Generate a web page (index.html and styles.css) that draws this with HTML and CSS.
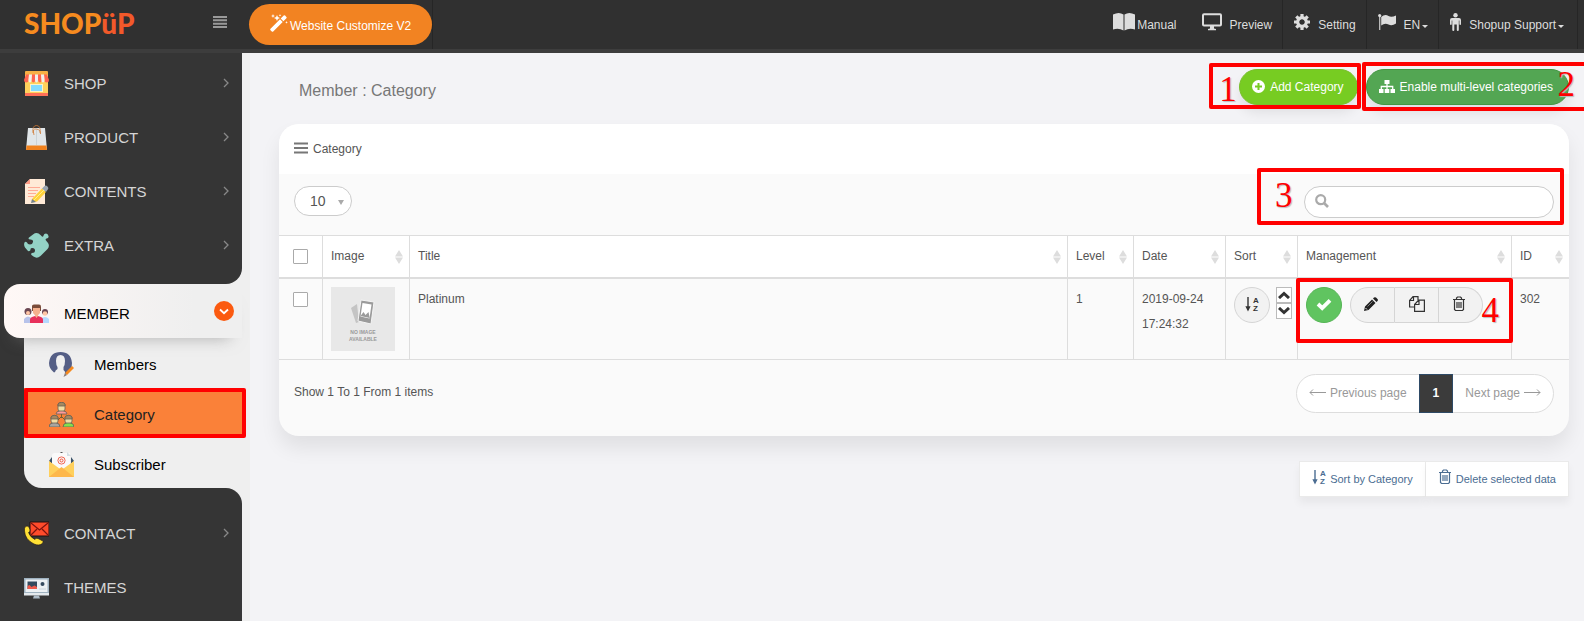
FILE: index.html
```html
<!DOCTYPE html>
<html lang="en">
<head>
<meta charset="utf-8">
<meta name="viewport" content="width=device-width, initial-scale=1">
<title>Member : Category</title>
<link rel="stylesheet" href="styles.css">
</head>
<body>
<svg class="defs" aria-hidden="true">
  <symbol id="i-sort" viewBox="0 0 8 14"><path d="M4 0 8 6.500H0zM4 14 0 7.500h8z" fill="#ddd"/></symbol>
  <symbol id="i-chev" viewBox="0 0 8 10"><path d="M2 1l4 4-4 4" fill="none" stroke="#888" stroke-width="1.300"/></symbol>
  <symbol id="i-trash" viewBox="0 0 14 16"><path d="M1 3.500h12M4.500 3.500V2l1-1h3l1 1v1.500M2.500 3.500V13.500l1 1h7l1-1V3.500M5 6v6M7 6v6M9 6v6" fill="none" stroke="currentColor" stroke-width="1.200"/></symbol>
  <symbol id="i-caret" viewBox="0 0 6 3"><path d="M0 0h6L3 3z" fill="currentColor"/></symbol>
</svg>

<header class="topbar">
  <a class="logo" href="#" aria-label="ShopUp"><span>SHOP</span><span class="logo-red">üP</span></a>
  <button class="menu-toggle" type="button" aria-label="Toggle menu"><svg width="14" height="12"><path d="M0 1h14M0 4.300h14M0 7.700h14M0 11h14" stroke="#999" stroke-width="2"/></svg></button>
  <div class="customize-wrap"><a class="customize" href="#">
    <svg width="18" height="18" viewBox="0 0 18 18" fill="#fff"><path d="M.5 14.800 10 5.300l2.700 2.700-9.500 9.500q-.7.600-1.400 0l-1.300-1.300q-.6-.7 0-1.400zM10.700 4.600l3-3q.7-.6 1.400 0l1.300 1.300q.6.7 0 1.400l-3 3z"/><path d="M3 0l.6 1.400L5 2l-1.400.6L3 4l-.6-1.400L1 2l1.400-.6zM7 1l.9 2.100L10 4l-2.100.9L7 7l-.9-2.100L4 4l2.100-.9zM10 0l.4.9.9.4-.9.4-.4.9-.4-.9-.9-.4.9-.4zM16.500 7l.4 1 1 .4-1 .4-.4 1-.4-1-1-.4 1-.4z"/></svg>
    Website Customize V2</a></div>
  <nav class="top-links">
    <a class="manual" href="#"><svg width="22" height="18" viewBox="0 0 22 18" fill="#ddd"><path d="M0 1.500Q6-1.500 10.500 1.500V17.500Q6 14.800 0 16.500zM11.500 1.500Q16-1.500 22 1.500V16.500Q16 14.800 11.500 17.500z"/></svg>Manual</a>
    <a href="#"><svg width="20" height="18" viewBox="0 0 20 18"><rect x="1" y="1.200" width="18" height="11.300" rx="1" fill="none" stroke="#ddd" stroke-width="2"/><path d="M8 13h4v2.500l2 .5v1.200H6V16l2-.5z" fill="#ddd"/></svg>Preview</a>
    <a href="#"><svg width="16" height="16" viewBox="0 0 16 16"><circle cx="8" cy="8" r="4.200" fill="none" stroke="#ddd" stroke-width="3.400"/><path d="M8 0v3.500M8 12.500V16M0 8h3.500M12.500 8H16M2.300 2.300l2.500 2.500M11.200 11.200l2.500 2.500M13.700 2.300l-2.500 2.500M4.800 11.200l-2.500 2.500" stroke="#ddd" stroke-width="3.200"/><circle cx="8" cy="8" r="2.500" fill="#303030"/></svg>Setting</a>
    <a href="#"><svg width="18" height="16" viewBox="0 0 18 16" fill="#ddd"><circle cx="1.700" cy="1.600" r="1.600"/><path d="M1.200 2h1.100v14H1.200zM3.200 3Q7-.5 10.500 2q3 1.700 7.500-.6v8.200q-4 2.600-7.500 1-3.500-1.800-7.300.8z"/></svg>EN<svg class="caret" width="6" height="3"><use href="#i-caret"/></svg></a>
    <a class="user" href="#"><svg width="11" height="18" viewBox="0 0 11 18" fill="#ddd"><circle cx="5.500" cy="2.200" r="2.200"/><path d="M2 5h7q2 0 2 2v4q0 .9-.8.900T9.400 11V7.500h-.6V17q0 1-1 1t-1-1v-5.500H4.300V17q0 1-1 1t-1-1V7.500h-.6V11q0 .9-.8.900T0 11V7q0-2 2-2z"/></svg>Shopup Support<svg class="caret" width="6" height="3"><use href="#i-caret"/></svg></a>
  </nav>
</header>

<div class="layout">
  <aside class="sidebar">
    <nav class="nav-block nav-upper">
      <a class="nav-item" href="#"><svg class="ico" viewBox="0 0 25 25"><path d="M1 3h23v21q0 1-1 1H2q-1 0-1-1z" fill="#ffd15c"/><path d="M1 1q0-1 1-1h21q1 0 1 1v3H1z" fill="#f7b045"/><path d="M2 3.500h3L4.500 9q0 2.500-2.200 2.500T0 9zM8 3.500h3V9q0 2.500-1.500 2.500T7.500 9zM14 3.500h3l.5 5.500q0 2.500-1.500 2.500T14 9zM20 3.500h3L25 9q0 2.500-2.300 2.500T20.500 9z" fill="#ff6350"/><path d="M5 3.500h3L7.500 9q0 2.500-1.500 2.500T4.500 9zM11 3.500h3V9q0 2.500-1.500 2.500T11 9zM17 3.500h3l.5 5.500q0 2.500-1.500 2.500T17.500 9z" fill="#f2eeee"/><path d="M6 13h13v8H6z" fill="#fff3c4"/><path d="M7 14h11v6H7z" fill="#84dbff"/><path d="M1 22h23v2q0 1-1 1H2q-1 0-1-1z" fill="#ff7058"/></svg><span>SHOP</span><svg class="chev"><use href="#i-chev"/></svg></a>
      <a class="nav-item" href="#"><svg class="ico" viewBox="0 0 25 25"><path d="M4 3h17l2 22H2z" fill="#e1e6e9"/><path d="M2.500 20.500h20L23 25H2z" fill="#f0821e"/><path d="M12.500 4v16" stroke="#ccd3d7"/><path d="M9 8Q8 .5 12.500.5T16 8M10 10Q8 3 12.500 4t4 5" fill="none" stroke="#cf7a35" stroke-width=".8"/></svg><span>PRODUCT</span><svg class="chev"><use href="#i-chev"/></svg></a>
      <a class="nav-item" href="#"><svg class="ico" viewBox="0 0 25 25"><path d="M6 0h15v25H1V5z" fill="#ffead7"/><path d="M6 0v5H1z" fill="#ff9b85"/><path d="M4 8.500h12M4 11.500h10M4 14.500h8M4 17.500h6" stroke="#ff9a85" stroke-width=".8"/><path d="M8 20 18 9.500l4 3.500-9 9.500-5 1z" fill="#ffd13b"/><path d="M10 21 20 11" stroke="#fff08a"/><path d="M18 9.500 20.500 7q1.500-1 3 .5t.5 2.800L22 13z" fill="#9aa5b0"/><path d="M8 20l4 3-5 1z" fill="#758390"/></svg><span>CONTENTS</span><svg class="chev"><use href="#i-chev"/></svg></a>
      <a class="nav-item" href="#"><svg class="ico" viewBox="0 0 25 25"><path d="M5 4.500 9 1.500q4-3 7.500.5l1.500 1.500q1.500.5 1.500-1Q20 .5 22 .5T24.500 3 22.500 5.500q-1.500.5-.5 2l2 2.500q2 3-.5 6l-7 7q-3.500 3-7 .5L7.500 22q-1-1.500.5-2 3 0 3-2.500T8.500 15 6.500 17q-.5 1.500-2.500 1L1 14.500Q-.5 12 .5 9.500 1.500 8 3 9.500q.5 2 3 2T9 9 6.500 6.500 5 4.500z" fill="#94d3c6"/></svg><span>EXTRA</span><svg class="chev"><use href="#i-chev"/></svg></a>
    </nav>
    <div class="nav-open">
      <a class="nav-item nav-current" href="#"><svg class="ico" viewBox="0 0 25 25"><circle cx="4" cy="10.500" r="3.500" fill="#6b4652"/><circle cx="4" cy="12" r="2" fill="#ffc6a5"/><path d="M0 22v-4q4-5 8 0v4z" fill="#b8c3ea"/><circle cx="21" cy="11" r="3" fill="#6b4652"/><circle cx="21" cy="12.500" r="2.300" fill="#ffc6a5"/><path d="M17 22v-4q4-4 8 0v4z" fill="#b5d9ff"/><path d="M8 5q0-1.500 2-1.500h5q2 0 2 2V10H8z" fill="#7b4c3a"/><path d="M9 7h7v5q-3.500 5-7 0zM11 13h3v4h-3z" fill="#f5b08d"/><path d="M6 22v-3.500q0-2 2-2.500l3-1 1.500 2 1.500-2 3 1q2 .5 2 2.500V22z" fill="#e8315b"/></svg><span>MEMBER</span><svg class="open-mark" viewBox="0 0 20 20"><circle cx="10" cy="10" r="10" fill="#fb5a10"/><path d="M6 8.500l4 3.700 4-3.700" fill="none" stroke="#fff" stroke-width="1.800"/></svg></a>
      <div class="submenu">
        <a href="#"><svg class="ico" viewBox="0 0 25 25"><path d="M5 20.500Q0 16.500 0 11 1 0 11.500 0T23 11l-.5 5L16 22l-1-3H8z" fill="#555f86"/><path d="M7 9q0-6 4.500-6T16 9q0 4-1.500 6v3q2 1 1.500 3.500-5 2-10-.8Q6 18 8.500 17v-2Q7 13 7 9z" fill="#f0f0f0"/><path d="M16 21l7-7 2 2-7 7z" fill="#f58a1f"/><path d="M16 21l2 2-3.500 2z" fill="#8a7a74"/></svg>Members</a>
        <a class="active" href="#"><svg class="ico" viewBox="0 0 25 25"><path d="M12.500 11v5M8 19l4.500-4.500L17 19" stroke="#74602f" fill="none"/><g stroke="#675f53" stroke-width=".8"><rect x="9" y=".5" width="7" height="9" rx="2.500" fill="#f2dda4"/><path d="M9 4V2q3.500-3.500 7 0v2z" fill="#a58860"/><path d="M7 12q0-3 4-3h3q4 0 4 3z" fill="#ff9a9a"/><rect x="2" y="13.500" width="7" height="8" rx="2.500" fill="#f2dda4"/><path d="M2 17v-2q3.500-3.500 7 0v2z" fill="#a58860"/><path d="M0 25q0-4 4-4h3q4 0 4 4z" fill="#a8a5a0"/><rect x="16" y="13.500" width="7" height="8" rx="2.500" fill="#f2dda4"/><path d="M16 17v-2q3.500-3.500 7 0v2z" fill="#a58860"/><path d="M14 25q0-4 4-4h3q4 0 4 4z" fill="#83e04f"/></g></svg>Category<i class="mark mark-menu"></i></a>
        <a href="#"><svg class="ico" viewBox="0 0 25 25"><path d="M0 9 3 5v7zM25 9l-3-4v7z" fill="#3b5368"/><path d="M3 4q0-3 3-3h15v15H3z" fill="#fafafa"/><path d="M18 0l4 4h-4z" fill="#d5dfe4"/><path d="M11 0h3l-1 1h-1z" fill="#555"/><circle cx="12.500" cy="8.500" r="3.600" fill="none" stroke="#f0563f" stroke-width=".9"/><circle cx="12.500" cy="8.500" r="1.500" fill="none" stroke="#f0563f"/><path d="M0 9 12.500 18 25 9v16H0z" fill="#ffd05c"/><path d="M0 25 12.500 15 25 25z" fill="#fdb74b"/></svg>Subscriber</a>
      </div>
    </div>
    <nav class="nav-block nav-lower">
      <a class="nav-item" href="#"><svg class="ico" viewBox="0 0 25 25"><path d="M6 1h19v14H6z" fill="#ff4b2b" stroke="#1f1110"/><path d="M7 2l8.500 7L24 2M7 14l6-6M24 14l-6-6" fill="none" stroke="#7b120e" stroke-width="1.200"/><path d="M1 6q2-2 4 0l1 3q0 2-1.500 2.500Q6 16 11 18.500q1-2 3-1l4 2q2 1 .5 2.800-3 3-8.500.7Q1 18.500.5 10 .3 7 1 6z" fill="#ffe135" stroke="#1f1110" stroke-width=".6"/></svg><span>CONTACT</span><svg class="chev"><use href="#i-chev"/></svg></a>
      <a class="nav-item" href="#"><svg class="ico" viewBox="0 0 25 25"><path d="M0 3h25v17H0z" fill="#9fb2c0"/><path d="M1.500 4.500h22V17h-22z" fill="#edf1f4"/><path d="M0 18h25v2.500H0z" fill="#e4e9ed"/><path d="M10 20.500h5l1 3H9z" fill="#aebcc8"/><path d="M3.500 6.500H13V14H3.500z" fill="#344a5e"/><path d="M3.500 14v-3l2-1 2 2 3-1.500L13 12v2z" fill="#ef5b4c"/><circle cx="18.500" cy="9" r="2" fill="#344a5e"/><path d="M15 14h7" stroke="#ccd6dd"/></svg><span>THEMES</span></a>
    </nav>
  </aside>

  <main class="content">
    <div class="page-head">
      <h1>Member : Category</h1>
      <div class="page-actions">
        <div class="marked"><a class="btn btn-add" href="#"><svg width="13" height="13" viewBox="0 0 13 13"><circle cx="6.500" cy="6.500" r="6.500" fill="#fff"/><path d="M6.500 3v7M3 6.500h7" stroke="#7c2" stroke-width="2"/></svg>Add Category</a><i class="mark mark-add"></i><b class="num num-add">1</b></div>
        <div class="marked"><a class="btn btn-multi" href="#"><svg width="16" height="13" viewBox="0 0 16 13" fill="#fff"><path d="M5.500 0h5v4h-5zM0 9h4.500v4H0zM5.700 9h4.600v4H5.700zM11.500 9H16v4h-4.500z"/><path d="M8 4v5M2.300 9V6.500h11.400V9" fill="none" stroke="#fff" stroke-width="1.300"/></svg>Enable multi-level categories</a><i class="mark mark-multi"></i><b class="num num-multi">2</b></div>
      </div>
    </div>

    <section class="panel">
      <h2><svg width="14" height="12"><path d="M0 1.500h14M0 6h14M0 10.500h14" stroke="#777" stroke-width="2"/></svg>Category</h2>
      <div class="toolbar">
        <div class="select"><select aria-label="Items per page"><option>10</option><option>25</option></select><svg width="6" height="5"><path d="M0 0h6L3 5z" fill="#aaa"/></svg></div>
        <div class="marked search"><input type="search" aria-label="Search"><svg width="14" height="14" viewBox="0 0 14 14"><circle cx="5.700" cy="5.700" r="4.500" fill="none" stroke="#aaa" stroke-width="2.200"/><path d="M9 9l4 4" stroke="#aaa" stroke-width="2.600"/></svg><i class="mark mark-search"></i><b class="num num-search">3</b></div>
      </div>
      <table>
        <colgroup><col class="c-check"><col class="c-image"><col><col class="c-level"><col class="c-date"><col class="c-sort"><col class="c-manage"><col class="c-id"></colgroup>
        <thead><tr>
          <th class="check"><input type="checkbox" aria-label="Select all"></th>
          <th><div>Image<svg><use href="#i-sort"/></svg></div></th>
          <th><div>Title<svg><use href="#i-sort"/></svg></div></th>
          <th><div>Level<svg><use href="#i-sort"/></svg></div></th>
          <th><div>Date<svg><use href="#i-sort"/></svg></div></th>
          <th><div>Sort<svg><use href="#i-sort"/></svg></div></th>
          <th><div>Management<svg><use href="#i-sort"/></svg></div></th>
          <th><div>ID<svg><use href="#i-sort"/></svg></div></th>
        </tr></thead>
        <tbody><tr>
          <td class="check"><input type="checkbox" aria-label="Select Platinum"></td>
          <td><svg class="thumb" viewBox="0 0 64 64"><path d="M0 0h64v64H0z" fill="#e8e8e8"/><path d="M20 21l6-4 2 18-3 1z" fill="#c4c4c4"/><path d="M30 13l13 2-3 22-13-3z" fill="#9b9b9b" stroke="#f4f4f4"/><path d="M31.500 16l9 1.500-2 14-9-2z" fill="#fff"/><path d="M29.500 29l3-4 2 3 3-3 1.200 6z" fill="#9b9b9b"/><text x="32" y="47" font-size="5">NO IMAGE</text><text x="32" y="54" font-size="5">AVAILABLE</text></svg></td>
          <td>Platinum</td>
          <td>1</td>
          <td>2019-09-24<br>17:24:32</td>
          <td><div class="sort-cell"><button class="round" type="button" aria-label="Sort"><svg class="alpha" width="14" height="16" viewBox="0 0 14 16"><path d="M3 1v12M1.500 11 3 14l1.500-3z" fill="currentColor" stroke="currentColor" stroke-width="1.400"/><text x="8" y="7" font-size="8">A</text><text x="8" y="15" font-size="8">Z</text></svg></button>
            <div class="steps"><button type="button" aria-label="Move up"><svg width="12" height="8"><path d="M1 7l5-4.500L11 7" fill="none" stroke="#333" stroke-width="3"/></svg></button><button type="button" aria-label="Move down"><svg width="12" height="8"><path d="M1 1l5 4.500L11 1" fill="none" stroke="#333" stroke-width="3"/></svg></button></div></div></td>
          <td class="manage"><div class="tools">
            <button class="round ok" type="button" aria-label="Enabled"><svg width="16" height="13" viewBox="0 0 16 13"><path d="M2 6l4.200 4L14 2.300" fill="none" stroke="#fff" stroke-width="3.800"/></svg></button>
            <div class="group">
              <button type="button" aria-label="Edit"><svg width="14" height="14" viewBox="0 0 14 14"><path d="M0 14l1-4.500L8 2.500 11.500 6l-7 7zM9 1.600l1-1q1-.9 2 0l1.500 1.500q.9 1 0 2l-1 1z" fill="#222"/><path d="M3.500 9.500 8.500 4.500" stroke="#aaa" stroke-width=".7"/><path d="M1.500 11l1.500 1.500" stroke="#eee"/></svg></button>
              <button type="button" aria-label="Copy"><svg width="16" height="16" viewBox="0 0 16 16"><path d="M5.500 11H.6V4.500L4 .6h5V4M4.500.6V4.500H.6M5.600 8.500l4-4.300h5.800v11.200H5.600zM10 4.200v4.300H5.600" fill="none" stroke="#333" stroke-width="1.200"/></svg></button>
              <button type="button" aria-label="Delete"><svg width="14" height="16"><use href="#i-trash"/></svg></button>
            </div></div><i class="mark mark-manage"></i><b class="num num-manage">4</b></td>
          <td>302</td>
        </tr></tbody>
      </table>
      <div class="panel-foot">
        <span>Show 1 To 1 From 1 items</span>
        <nav class="pager"><a href="#"><svg width="17" height="7"><path d="M17 3.500H1M4 .5l-3 3 3 3" fill="none" stroke="#999"/></svg>Previous page</a><a class="current" href="#">1</a><a href="#">Next page<svg width="17" height="7"><path d="M0 3.500h16M13 .5l3 3-3 3" fill="none" stroke="#999"/></svg></a></nav>
      </div>
    </section>

    <div class="bulk">
      <button type="button"><svg class="alpha" width="14" height="16" viewBox="0 0 14 16"><path d="M3 1v12M1.500 11 3 14l1.500-3z" fill="currentColor" stroke="currentColor" stroke-width="1.400"/><text x="8" y="7" font-size="8">A</text><text x="8" y="15" font-size="8">Z</text></svg>Sort by Category</button>
      <button type="button"><svg width="14" height="16"><use href="#i-trash"/></svg>Delete selected data</button>
    </div>
  </main>
</div>
</body>
</html>
```
FILE: styles.css
```css
* { box-sizing: border-box; }
body {
  margin: 0;
  overflow-x: hidden;
  background: #f3f3f6;
  color: #555;
  font: 12px/18px "Liberation Sans", Arial, sans-serif;
}
a { color: inherit; text-decoration: none; }
button, input, select { font: inherit; color: inherit; margin: 0; }
button { padding: 0; cursor: pointer; }
svg { flex: none; display: block; }
.defs { position: absolute; width: 0; height: 0; }
.alpha { overflow: visible; }
.alpha text { font-family: "Liberation Sans", sans-serif; font-weight: 700; fill: currentColor; }

/* Top bar */
.topbar {
  display: flex;
  align-items: center;
  height: 53px;
  background: #303030;
  border-bottom: 4px solid #3d3d3d;
  color: #ddd;
}
.logo {
  width: 213px;
  padding: 0 0 4px 24px;
  font: 900 28px/40px Lato, sans-serif;
  color: #f68b1f;
}
.logo-red { color: #f2592a; }
.menu-toggle { width: 36px; border: 0; background: none; padding-bottom: 5px; }
.customize-wrap { align-self: stretch; padding-top: 4px; border-right: 1px solid #262626; }
.customize {
  display: flex;
  align-items: center;
  gap: 2px;
  height: 41px;
  padding: 2px 21px 0;
  border-radius: 21px;
  background: #f28322;
  color: #fff;
}
.customize svg { margin-bottom: 5px; }
.top-links { display: flex; align-self: stretch; margin-left: auto; padding-right: 6px; }
.top-links a {
  display: flex;
  align-items: center;
  gap: 8px;
  padding: 0 10px 0 11px;
  border-right: 1px solid #262626;
}
.top-links a svg { margin-bottom: 5px; }
.top-links a .caret { margin: 3px 0 0 -6px; }
.top-links .manual { gap: 2px; border: 0; padding-right: 14px; }
.top-links .user { padding-right: 13px; }

/* Sidebar */
.layout { display: flex; min-height: calc(100vh - 53px); }
.sidebar {
  flex: none;
  display: flex;
  flex-direction: column;
  width: 250px;
  padding-right: 8px;
  background: #efefef;
  color: #d5d5d5;
  font-size: 15px;
}
.nav-block { background: #353535; }
.nav-upper { padding: 3px 0 12px; border-bottom-right-radius: 16px; }
.nav-lower { flex: 1; padding-top: 18px; border-top-right-radius: 16px; }
.nav-item {
  display: flex;
  align-items: center;
  height: 54px;
  padding: 0 12px 0 24px;
}
.nav-item span { flex: 1; margin-left: 15px; padding-top: 2px; }
.ico { width: 25px; height: 25px; }
.chev { width: 8px; height: 10px; }
.nav-open { background: linear-gradient(90deg, #353535 50%, #efefef 50%); color: #000; }
.nav-current {
  position: relative;
  margin-left: 4px;
  padding: 4px 8px 0 20px;
  border-radius: 16px 0 0 16px;
  background: linear-gradient(90deg, #fff8f6, #efefef 80%);
  box-shadow: 0 12px 16px -12px rgba(130, 130, 130, .6);
}
.open-mark { width: 20px; height: 20px; margin-bottom: 4px; }
.submenu { margin-left: 24px; background: #efefef; border-bottom-left-radius: 18px; }
.submenu a {
  position: relative;
  display: flex;
  align-items: center;
  gap: 20px;
  height: 50px;
  padding: 3px 0 0 25px;
}
.submenu .active { background: #fa8139; color: #222; }

/* Callout frames and numbers */
.marked, .manage { position: relative; }
.mark { position: absolute; z-index: 2; border: 4px solid #f00; border-radius: 2px; pointer-events: none; }
.num {
  position: absolute;
  z-index: 3;
  color: #f00;
  font: 400 35px/35px "Liberation Serif", serif;
  text-shadow: 1px 1px 1px #bbb;
  pointer-events: none;
}
.mark-menu { inset: 0 -4px 0 0; }
.mark-add { inset: -6px -3px -4px -30px; }
.mark-multi { inset: -7px -20px -6px -4px; }
.mark-search { inset: -18px -10px -7px -47px; }
.mark-manage { inset: -1px -2px 16px -2px; }
.num-add { left: -20px; top: 3px; }
.num-multi { right: -6px; top: -2px; }
.num-search { left: -29px; top: -8px; }
.num-manage { right: 12px; top: 14px; }

/* Page heading */
.content { flex: 1; min-width: 0; padding: 16px 15px 24px 29px; }
.page-head { display: flex; justify-content: space-between; }
.page-head h1 { margin: 0; padding: 12px 0 0 20px; font-size: 16px; line-height: 20px; font-weight: 400; color: #777; }
.page-actions { display: flex; gap: 8px; }
.btn {
  display: flex;
  align-items: center;
  gap: 5px;
  height: 36px;
  padding: 0 13px 0 12px;
  border-radius: 18px;
  color: #fff;
  box-shadow: 0 8px 12px rgba(0, 0, 0, .08);
}
.btn svg { margin-bottom: 2px; }
.btn-add { background: #7c2; border: 1px solid #7abf2d; }
.btn-multi { padding-right: 15px; background: #53a653; border: 1px solid #439643; }

/* Panel */
.panel { margin-top: 19px; border-radius: 20px; background: #fafafa; box-shadow: 0 12px 20px rgba(0, 0, 0, .08); }
.panel h2 {
  display: flex;
  align-items: center;
  gap: 5px;
  height: 50px;
  margin: 0;
  padding: 0 15px;
  border-radius: 20px 20px 0 0;
  background: #fff;
  font-size: 12px;
  font-weight: 400;
}
.panel h2 svg { margin-bottom: 3px; }
.toolbar { display: flex; justify-content: space-between; padding: 12px 15px 17px; }
.select { position: relative; height: 30px; }
.select select {
  appearance: none;
  width: 58px;
  height: 30px;
  padding: 0 15px;
  border: 1px solid #ccc;
  border-radius: 15px;
  background: #fff;
  font-size: 14px;
}
.select svg { position: absolute; right: 8px; top: 14px; pointer-events: none; }
.search input {
  appearance: none;
  width: 250px;
  height: 32px;
  padding: 0 12px 0 34px;
  border: 1px solid #ccc;
  border-radius: 16px;
  background: #fff;
}
.search svg { position: absolute; left: 11px; top: 8px; }

table { width: 100%; table-layout: fixed; border-collapse: separate; border-spacing: 0; }
.c-check { width: 44px; }
.c-image { width: 87px; }
.c-level { width: 66px; }
.c-date { width: 92px; }
.c-sort { width: 72px; }
.c-manage { width: 214px; }
.c-id { width: 57px; }
th, td { padding: 8px 0 8px 8px; border-right: 1px solid #ddd; text-align: left; font-weight: 400; vertical-align: top; line-height: 25px; }
th:last-child, td:last-child { border-right: 0; }
th { background: #fff; border-top: 1px solid #ddd; border-bottom: 2px solid #ddd; }
td { background: #fafafa; border-bottom: 1px solid #ddd; }
th div { display: flex; align-items: center; justify-content: space-between; padding-right: 6px; }
th svg { width: 8px; height: 14px; }
.check { padding-left: 14px; }
input[type="checkbox"] {
  appearance: none;
  display: block;
  width: 15px;
  height: 15px;
  margin: 5px 0;
  border: 1px solid #aaa;
  border-radius: 1px;
  background: #fff;
}
.thumb { width: 64px; height: 64px; }
.thumb text { font-family: "Liberation Sans", sans-serif; font-weight: 700; fill: #999; text-anchor: middle; }
.sort-cell, .tools { display: flex; gap: 8px; color: #333; }
.round {
  display: grid;
  place-items: center;
  width: 36px;
  height: 36px;
  border: 1px solid #d5d5d5;
  border-radius: 18px;
  background: #f2f2f2;
}
.round svg { margin-bottom: 2px; }
.sort-cell { gap: 6px; }
.ok { border-color: #55b555; background: #60c460; }
.steps button { display: grid; place-items: center; width: 16px; height: 16px; border: 1px solid #bbb; background: #fff; }
.group { display: flex; }
.group button {
  display: grid;
  place-items: center;
  width: 44px;
  height: 36px;
  padding-bottom: 3px;
  border: 1px solid #d5d5d5;
  border-left-width: 0;
  background: #f2f2f2;
}
.group button:first-child { width: 45px; padding-right: 4px; border-left-width: 1px; border-radius: 18px 0 0 18px; }
.group button:last-child { padding-right: 4px; border-radius: 0 18px 18px 0; }

.panel-foot { display: flex; justify-content: space-between; padding: 14px 15px 23px; }
.panel-foot span { padding-top: 9px; }
.pager { display: flex; height: 39px; border: 1px solid #ddd; border-radius: 20px; background: #fff; color: #999; }
.pager a { display: flex; align-items: center; gap: 4px; padding: 0 12px 2px; }
.pager .current { margin: -1px 0; padding: 0 13px 2px; border: 1px solid #2e4a66; background: #3b3b3b; color: #fff; font-weight: 700; }

.bulk { display: flex; justify-content: flex-end; margin-top: 25px; }
.bulk button {
  display: flex;
  align-items: center;
  gap: 4px;
  height: 36px;
  padding: 0 12px;
  border: 1px solid #eaeaea;
  background: #fff;
  color: #4b6d92;
  font-size: 11px;
  box-shadow: 0 6px 8px rgba(0, 0, 0, .05);
}
.bulk button + button { border-left-width: 0; }
.bulk svg { margin-bottom: 4px; }
```
